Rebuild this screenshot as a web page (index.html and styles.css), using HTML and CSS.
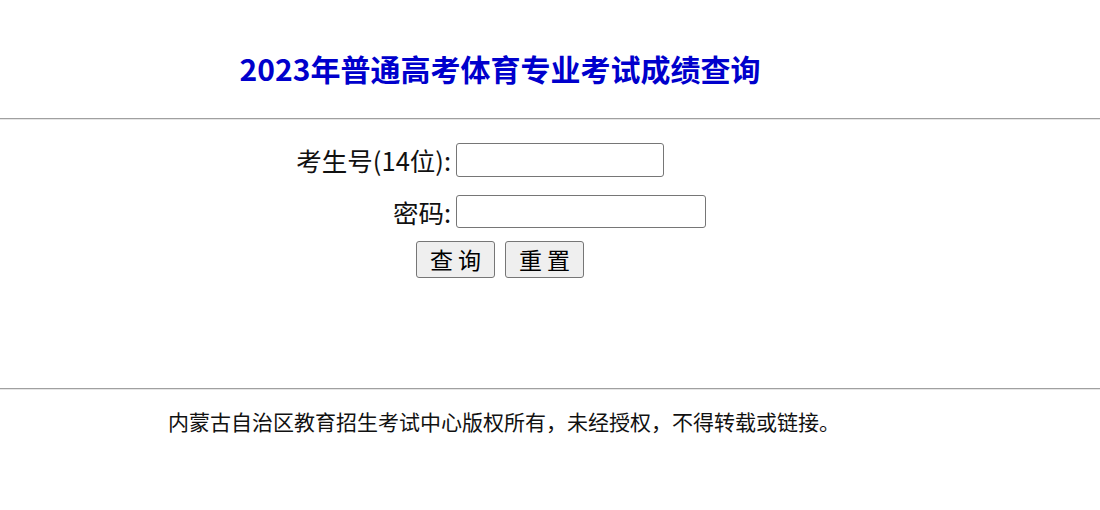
FILE: index.html
```html
<!DOCTYPE html>
<html lang="zh-CN">
<head>
<meta charset="utf-8">
<title>2023年普通高考体育专业考试成绩查询</title>
<link rel="stylesheet" href="styles.css">
</head>
<body>
<div class="header">
  <h1 class="title">2023年普通高考体育专业考试成绩查询</h1>
</div>
<hr class="rule">
<form class="form">
  <div class="row row-first">
    <label class="label" for="ksh">考生号(14位):</label>
    <input class="field field-short" id="ksh" type="text">
  </div>
  <div class="row row-second">
    <label class="label" for="mm">密码:</label>
    <input class="field field-long" id="mm" type="password">
  </div>
  <div class="actions">
    <button class="btn" type="button">查 询</button>
    <button class="btn" type="reset">重 置</button>
  </div>
</form>
<hr class="rule">
<div class="footer">内蒙古自治区教育招生考试中心版权所有，未经授权，不得转载或链接。</div>
</body>
</html>
```

FILE: styles.css
```css
html, body {
  margin: 0;
  padding: 0;
  background: #ffffff;
}
body {
  font-family: "Noto Sans CJK SC", "Noto Sans", sans-serif;
  color: #000000;
}
.header {
  width: 1000px;
  height: 118px;
  box-sizing: border-box;
  padding-top: 50px;
}
.title {
  margin: 0;
  text-align: center;
  font-size: 30px;
  line-height: 36px;
  font-weight: bold;
  color: #0000cc;
}
.rule {
  margin: 0;
  height: 0;
  border: 0;
  border-top: 1px solid #a0a0a0;
  border-bottom: 1px solid #e6e6e6;
}
.form {
  width: 1000px;
  height: 268px;
  box-sizing: border-box;
  padding-top: 23px;
}
.row {
  display: grid;
  grid-template-columns: 451px auto;
  column-gap: 5px;
  align-items: center;
}
.row-second {
  margin-top: 18px;
}
.label {
  text-align: right;
  font-size: 25.5px;
  line-height: 30px;
  color: #111111;
}
.field {
  box-sizing: border-box;
  height: 34px;
  border: 1px solid #767676;
  border-radius: 3px;
  background: #ffffff;
  padding: 0 4px;
  font-size: 20px;
}
.field-short { width: 208px; }
.field-long { width: 250px; height: 33px; }
.actions {
  margin-top: 13px;
  display: flex;
  justify-content: center;
  gap: 10px;
}
.btn {
  box-sizing: border-box;
  width: 79px;
  height: 37px;
  padding: 0;
  border: 1px solid #767676;
  border-radius: 3px;
  background: #efefef;
  font-family: "Noto Sans CJK SC", sans-serif;
  font-size: 23px;
  line-height: 1;
  color: #000000;
}
.footer {
  width: 1000px;
  box-sizing: border-box;
  padding: 17px 0 0 8px;
  text-align: center;
  font-size: 21px;
  line-height: 28px;
  color: #111111;
}
```
